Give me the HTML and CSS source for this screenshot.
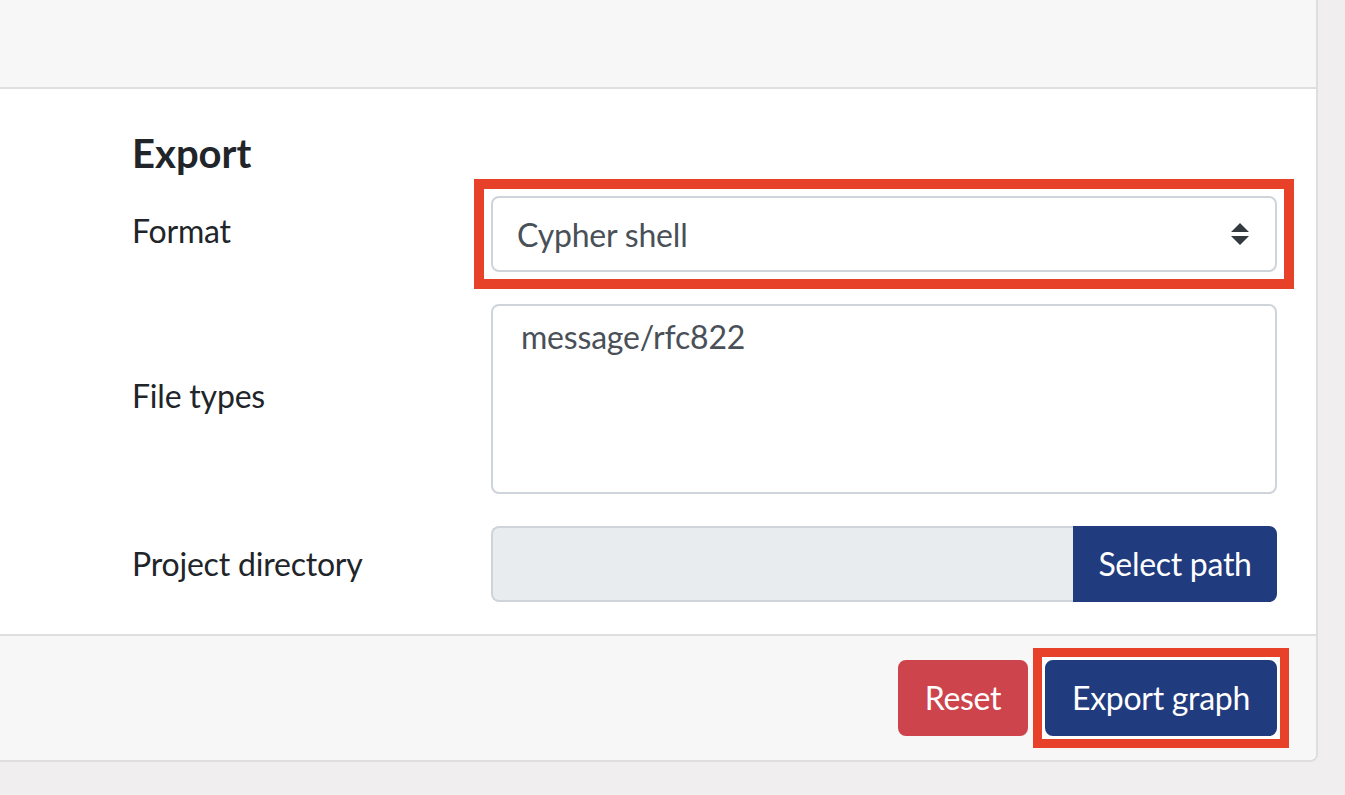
FILE: index.html
```html
<!DOCTYPE html>
<html>
<head>
<meta charset="utf-8">
<link rel="stylesheet" href="styles.css">
</head>
<body>
<div class="card">
  <div class="card-header"></div>
  <div class="card-body">
    <h5 class="title">Export</h5>
    <div class="form-row">
      <label class="label">Format</label>
      <div class="field">
        <span class="hl hl-select">
          <span class="select">
            <span class="select-text">Cypher shell</span>
            <svg class="arrows" width="18" height="22" viewBox="0 0 18 22"><path d="M9 0 L18 9 L0 9 Z M0 13 L18 13 L9 22 Z" fill="#343a40"/></svg>
          </span>
        </span>
      </div>
    </div>
    <div class="form-row">
      <label class="label">File types</label>
      <div class="field">
        <div class="multi">
          <div class="option">message/rfc822</div>
        </div>
      </div>
    </div>
    <div class="form-row last">
      <label class="label">Project directory</label>
      <div class="field">
        <div class="input-group">
          <div class="path-input"></div>
          <button class="btn btn-primary btn-append">Select path</button>
        </div>
      </div>
    </div>
  </div>
  <div class="card-footer">
    <button class="btn btn-danger">Reset</button>
    <span class="hl hl-btn"><button class="btn btn-primary btn-export">Export graph</button></span>
  </div>
</div>
</body>
</html>
```
FILE: styles.css
```css
* { box-sizing: border-box; }
html, body {
  margin: 0;
  padding: 0;
}
body {
  background: #f0eeee;
  font-family: Lato, "Open Sans", sans-serif;
  color: #212529;
  width: 1345px;
  height: 795px;
  overflow: hidden;
}
.card {
  width: 1318px;
  background: #fff;
  border-right: 2px solid #dedede;
  border-bottom: 2px solid #dedede;
  border-bottom-right-radius: 8px;
}
.card-header {
  height: 89px;
  background: #f7f7f7;
  border-bottom: 2px solid #dfdfdf;
}
.card-body {
  padding: 40px 39px 32px 132px;
}
.title {
  margin: 0 0 19px 0;
  font-size: 40px;
  line-height: 48px;
  font-weight: 700;
  color: #212529;
}
.form-row {
  display: grid;
  grid-template-columns: 359px 786px;
  align-items: center;
  margin-bottom: 32px;
}
.form-row.last { margin-bottom: 0; }
.label {
  font-size: 32px;
  line-height: 48px;
  padding-bottom: 6px;
  color: #212529;
  letter-spacing: -0.2px;
}
.form-row.last .label { padding-bottom: 0; }
.field { display: flex; }
.hl {
  display: flex;
  background: #fff;
}
.hl-select {
  padding: 7px;
  margin: -7px;
  width: calc(100% + 14px);
  outline: 10px solid #e8412a;
}
.select {
  flex: 1;
  height: 76px;
  display: flex;
  align-items: center;
  justify-content: space-between;
  border: 2px solid #ced4da;
  border-radius: 8px;
  padding: 0 26px 0 24px;
  color: #495057;
  font-size: 32px;
  letter-spacing: -0.2px;
  background: #fff;
}
.arrows { display: block; }
.multi {
  width: 100%;
  height: 190px;
  border: 2px solid #ced4da;
  border-radius: 8px;
  padding: 12px 24px;
}
.option {
  font-size: 32px;
  line-height: 38px;
  color: #495057;
  padding-left: 4px;
  letter-spacing: -0.2px;
}
.input-group {
  display: flex;
  width: 100%;
  height: 76px;
}
.path-input {
  flex: 1;
  background: #e9ecef;
  border: 2px solid #ced4da;
  border-right: 0;
  border-radius: 8px 0 0 8px;
}
.btn {
  font-family: Lato, "Open Sans", sans-serif;
  font-size: 32px;
  line-height: 48px;
  padding: 12px 0;
  border: 2px solid transparent;
  border-radius: 8px;
  color: #fff;
  cursor: pointer;
  height: 76px;
  letter-spacing: -0.3px;
  text-align: center;
}
.btn-primary {
  background: #213b7f;
  border-color: #213b7f;
}
.btn-append {
  width: 204px;
  border-radius: 0 8px 8px 0;
}
.btn-export { width: 232px; }
.btn-danger {
  width: 130px;
  background: #cd444c;
  border-color: #cd444c;
}
.card-footer {
  background: #f7f7f7;
  border-top: 2px solid #dfdfdf;
  border-bottom-right-radius: 8px;
  padding: 24px 39px 24px 40px;
  display: flex;
  justify-content: flex-end;
  align-items: center;
  gap: 17px;
}
.hl-btn {
  padding: 3px;
  margin: -3px;
  outline: 9px solid #e8412a;
}
```
